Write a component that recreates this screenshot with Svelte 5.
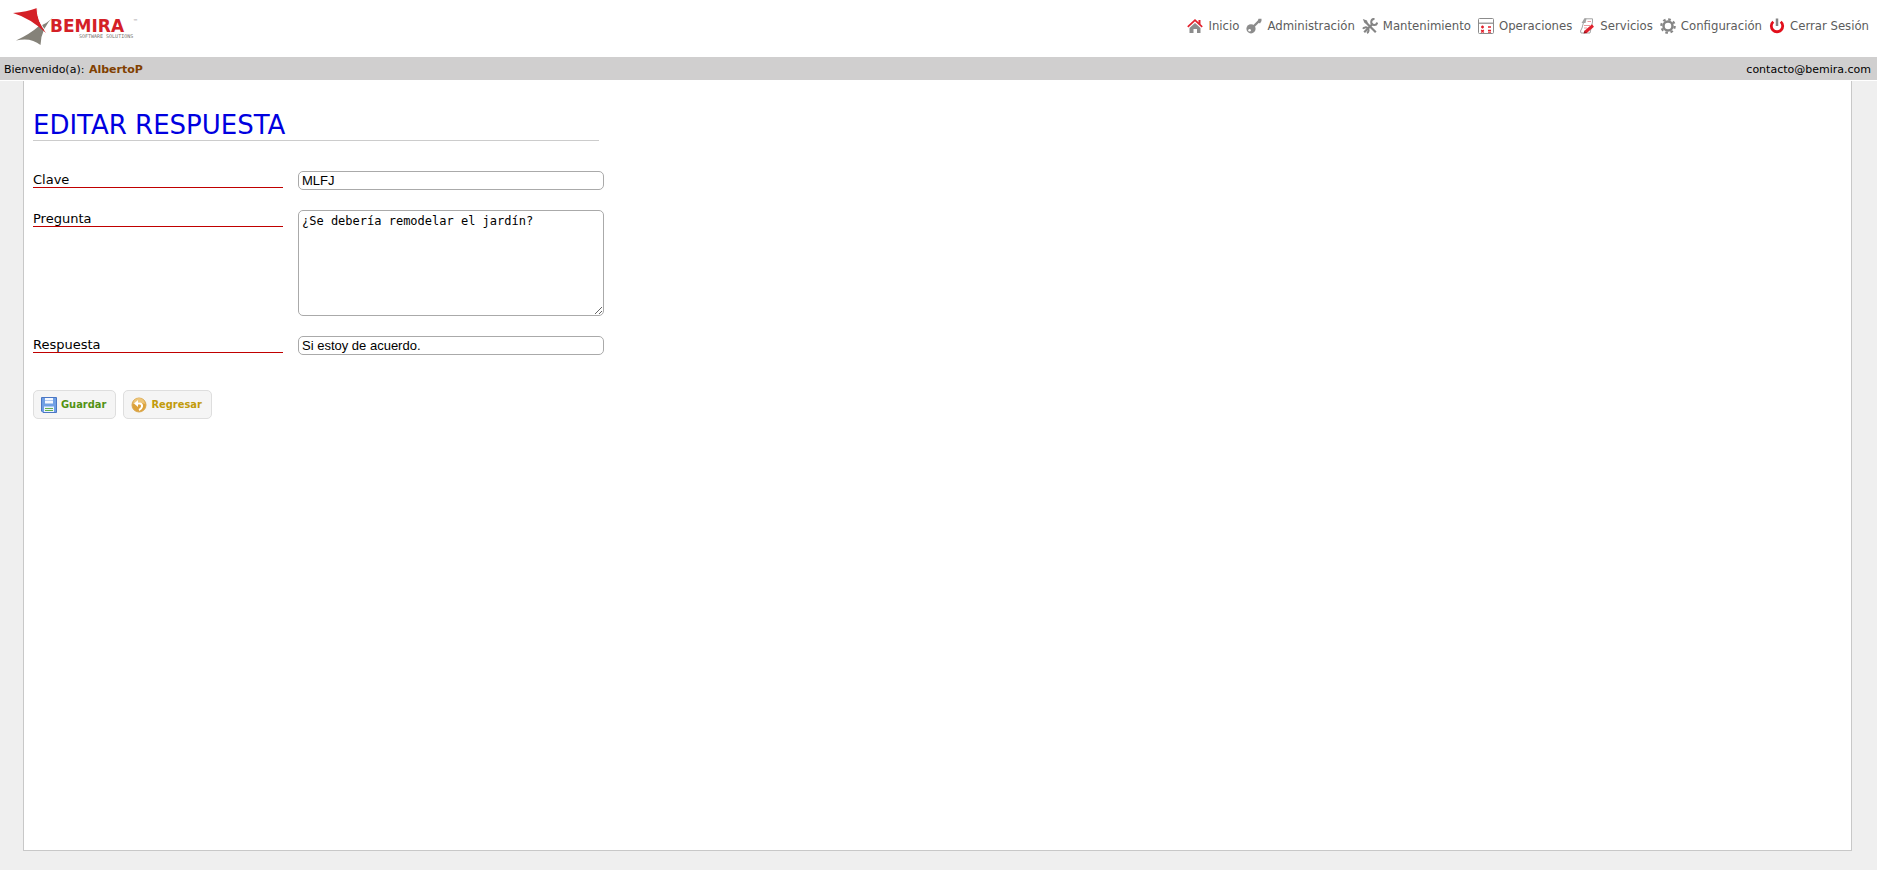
<script>
    // datos de la sesión y de la respuesta que se edita
    const usuario = 'AlbertoP';
    const menu = [
        { icono: 'inicio', texto: 'Inicio' },
        { icono: 'llave', texto: 'Administración' },
        { icono: 'herramientas', texto: 'Mantenimiento' },
        { icono: 'calculadora', texto: 'Operaciones' },
        { icono: 'nota', texto: 'Servicios' },
        { icono: 'engrane', texto: 'Configuración' },
        { icono: 'salir', texto: 'Cerrar Sesión' }
    ];

    let clave = $state('MLFJ');
    let pregunta = $state('¿Se debería remodelar el jardín?');
    let respuesta = $state('Si estoy de acuerdo.');
</script>

{#snippet icono(nombre)}
    <svg class="icono" viewBox="0 0 16 16" width="16" height="16" aria-hidden="true">
        {#if nombre === 'inicio'}
            <path fill="#8c8c8c" d="M8 5 13.500 10V15H10V11H6.500V15H2.500V10Z" />
            <path fill="none" stroke="#e2202c" stroke-width="1.700" d="M.8 8.800 8 2.200 15.200 8.800" />
            <path fill="#e2202c" d="M11.500 2H13.500V6.500L11.500 5Z" />
        {:else if nombre === 'llave'}
            <path fill="none" stroke="#8c8c8c" stroke-width="2.400" d="M6.500 9.500 14 2" />
            <path fill="#8c8c8c" d="M12.500 .8H15.500V3L14 5.500 11.500 4Z" />
            <circle cx="5" cy="10.800" r="4.600" fill="#8c8c8c" />
            <circle cx="3.600" cy="12.300" r="1.300" fill="#fff" />
        {:else if nombre === 'herramientas'}
            <path fill="none" stroke="#858585" stroke-width="2.200" d="M4 4.500 13.800 14.200M2.200 14.200 11 5.500" />
            <path fill="#858585" d="M.8 1 5 2.500 6 6 2.500 5Z" />
            <path fill="none" stroke="#858585" stroke-width="2" d="M12.500 1A3 3 0 1 0 15.200 4.500M1 10.800A3 3 0 1 1 5 15" />
        {:else if nombre === 'calculadora'}
            <rect x=".5" y=".5" width="15" height="15" rx="1" fill="#fff" stroke="#8c8c8c" />
            <path fill="#a0a0a0" d="M1 4.500H15V6H1Z" />
            <path stroke="#e2202c" stroke-width="1.300" d="M3 9H6M4.500 7.500V10.500M10 9H13M3.200 12 5.800 14.500M5.800 12 3.200 14.500M10 12.300H13M10 14.200H13" />
        {:else if nombre === 'nota'}
            <path fill="#fff" stroke="#a3a3a3" d="M5.500 .8H13.500V4L11 15H2L1.500 13 3 10Z" />
            <path fill="#a3a3a3" d="M5.500 .5H7.500L6.500 5H2.500Z" />
            <path stroke="#e89a9f" d="M8.500 3.500H12M5 7.500H11M5 10H8" />
            <path stroke="#e2202c" stroke-width="3" d="M6.500 14 14 7.500" />
            <path fill="#a30d18" d="M4.500 15.500 5.500 12.500 8 15Z" />
        {:else if nombre === 'engrane'}
            <circle cx="8" cy="8" r="4.500" fill="none" stroke="#858585" stroke-width="2.500" />
            <circle cx="8" cy="8" r="6.700" fill="none" stroke="#858585" stroke-width="2.200" stroke-dasharray="2.630 2.630" />
        {:else}
            <path fill="none" stroke="#e2101c" stroke-width="2.800" d="M4.300 3.700A5.700 5.700 0 1 0 11.700 3.700" />
            <path stroke="#858585" stroke-width="2.500" d="M8 .5V8" />
        {/if}
    </svg>
{/snippet}

<header class="cabecera">
    <a class="logo" href="#inicio" aria-label="Bemira Software Solutions">
        <svg viewBox="0 0 130 40" width="130" height="40">
            <path fill="#858279" d="M40 9 Q27 21 26.500 38 Q17 30 2 33.500 Q16 27 25 19 Q33 17 40 9Z" />
            <path fill="#d42027" d="M-1 6 Q13 5 23 1 Q23 14 32 26 Q16 11 -1 6Z" />
            <path stroke="#fff" d="M23 1Q23 14 33 26" fill="none" />
            <text x="36" y="25" class="marca">BEMIRA</text>
            <text x="65" y="31" class="lema">SOFTWARE SOLUTIONS</text>
            <text x="119" y="16" class="tm">™</text>
        </svg>
    </a>
    <nav class="menu">
        {#each menu as opcion}
            <a href="#{opcion.icono}">{@render icono(opcion.icono)}{opcion.texto}</a>
        {/each}
    </nav>
</header>

<div class="barra">
    <span>Bienvenido(a): <strong>{usuario}</strong></span>
    <a href="mailto:contacto@bemira.com">contacto@bemira.com</a>
</div>

<main class="fondo">
    <section class="panel">
        <h1>EDITAR RESPUESTA</h1>

        <form onsubmit={(e) => e.preventDefault()}>
            <div class="fila">
                <label for="clave">Clave</label>
                <input id="clave" type="text" bind:value={clave} />
            </div>
            <div class="fila">
                <label for="pregunta">Pregunta</label>
                <textarea id="pregunta" spellcheck="false" bind:value={pregunta}></textarea>
            </div>
            <div class="fila">
                <label for="respuesta">Respuesta</label>
                <input id="respuesta" type="text" bind:value={respuesta} />
            </div>

            <div class="botones">
                <button class="guardar" type="submit">
                    <svg viewBox="0 0 16 16" width="16" height="16" aria-hidden="true">
                        <path fill="#6f9fe4" stroke="#4a76c4" d="M.5.5H15.500V15.500H2L.5 14Z" />
                        <path fill="#f4f8ff" d="M4 1H12V6.500H4Z" />
                        <path stroke="#b4ccf2" d="M4 3.500H12" />
                        <path fill="#e9f2ff" d="M3 9.500H13V15H3Z" />
                        <path stroke="#65b04a" d="M4 11.500H12M4 13.500H12" />
                    </svg>
                    Guardar
                </button>
                <button class="regresar" type="button">
                    <svg viewBox="0 0 16 16" width="16" height="16" aria-hidden="true">
                        <circle cx="8" cy="8" r="7" fill="#dda23a" stroke="#d9a851" />
                        <path fill="#edc67b" d="M2 7A6 6 0 0 1 14 7Q8 4 2 7Z" />
                        <path fill="none" stroke="#fff" stroke-width="2" d="M6 6.500H9Q11.500 7 11 9.500T8 13" />
                        <path fill="#fff" d="M3 6.500 7 3V10Z" />
                    </svg>
                    Regresar
                </button>
            </div>
        </form>
    </section>
</main>

<style>
:global(body) {
    margin: 0; background: #efefef;
    font-family: Verdana, "DejaVu Sans", sans-serif;
}
a { color: inherit; text-decoration: none; }

/* cabecera con logo y menú */
.cabecera {
    display: flex; justify-content: space-between;
    height: 57px; padding: 0 8px 0 14px;
    background: #fff; box-sizing: border-box;
}
.logo { padding-top: 7px; }
.logo svg { overflow: visible; }
.marca { font: bold 17px "DejaVu Sans", sans-serif; fill: #d42027; }
.lema { font: 5px "DejaVu Sans Mono", monospace; fill: #77746f; }
.tm { font-size: 5px; fill: #888; }
.menu {
    display: flex; gap: 7px; padding-top: 17px;
    font: 13px/18px Tahoma, "DejaVu Sans Condensed", "DejaVu Sans", sans-serif; color: #5c5c5c;
}
.menu a { display: flex; align-items: center; gap: 5px; height: 17px; white-space: nowrap; }
.icono { flex: none; }

/* barra de bienvenida */
.barra {
    display: flex; justify-content: space-between; align-items: center;
    height: 23px; padding: 1px 6px 0 4px; box-sizing: border-box;
    background: #d0cfcf; font-size: 11px; color: #000;
}
.barra strong { margin-left: 1px; color: #804000; }

.fondo { padding: 0 25px 19px 23px; border-top: 1px solid #fff; }
.panel {
    min-height: calc(100vh - 100px); box-sizing: border-box;
    padding: 30px 9px; background: #fff;
    border: 1px solid #c8c8c8; border-top: 0;
}
h1 {
    max-width: 566px; margin: 0 0 30px;
    font-size: 26px; line-height: 29px; font-weight: normal;
    color: #0000e0; border-bottom: 1px solid #ccc;
}

/* formulario */
.fila { display: flex; align-items: flex-start; gap: 15px; margin-bottom: 20px; }
label {
    width: 250px; height: 16px; font-size: 13px; line-height: 18px;
    border-bottom: 1px solid #c00000;
}
input, textarea {
    width: 306px; box-sizing: border-box; margin: 0;
    border: 1px solid #aaa; border-radius: 5px;
    background: #fff; color: #000;
}
input { height: 19px; padding: 0 3px; font: 13px Arial, "Liberation Sans", sans-serif; }
textarea { height: 106px; padding: 3px; font: 12px/15px "DejaVu Sans Mono", monospace; }

.botones { display: flex; gap: 7px; padding-top: 15px; }
button {
    display: flex; align-items: center; gap: 4px;
    height: 29px; padding: 0 9px 0 7px;
    border: 1px solid #dedede; border-radius: 5px; background: #f5f5f5;
    font: bold 11px "DejaVu Sans Condensed", "DejaVu Sans", sans-serif;
    cursor: pointer;
}
button:hover { background: #ececec; }
.guardar { color: #529214; }
.regresar { color: #c29b0c; }
</style>
